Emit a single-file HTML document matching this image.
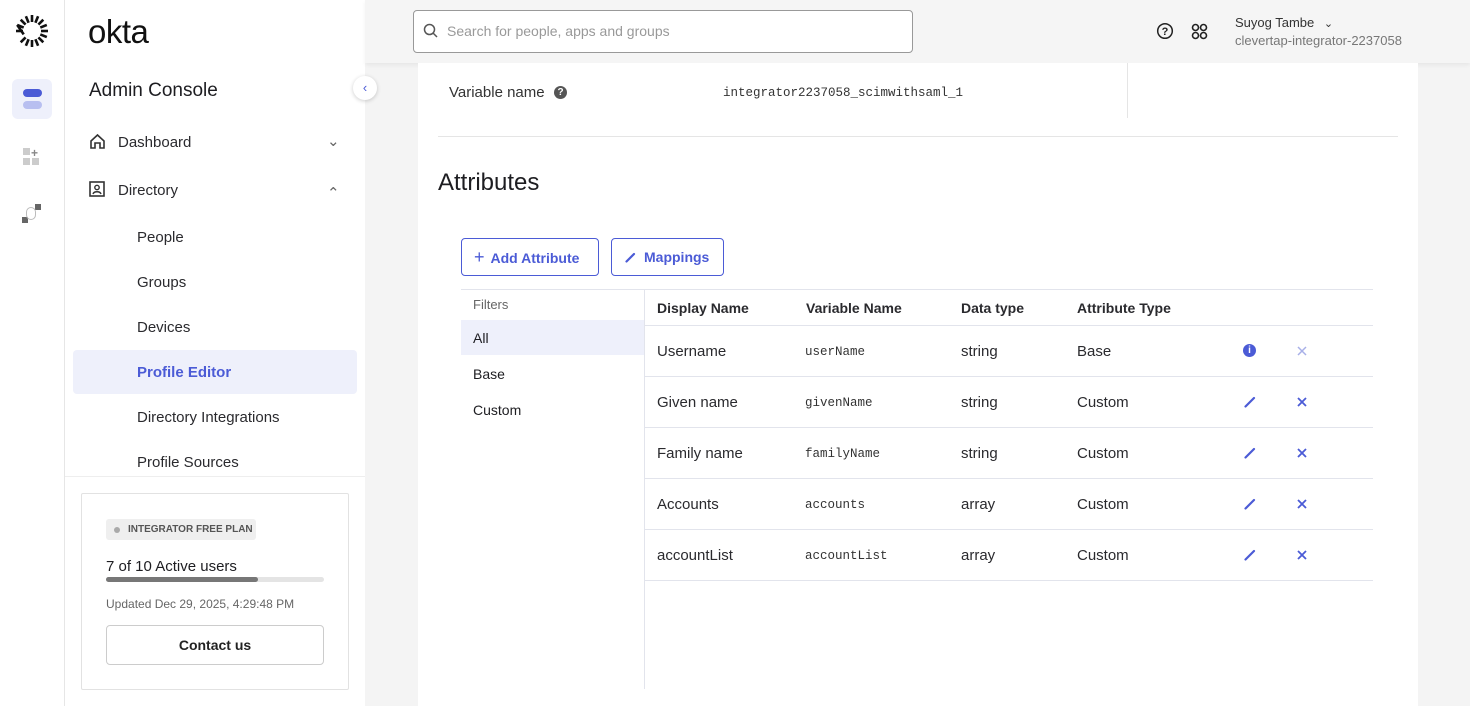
<!DOCTYPE html>
<html><head><style>
*{box-sizing:border-box;margin:0;padding:0}
body{width:1470px;height:706px;overflow:hidden;background:#f4f4f4;font-family:"Liberation Sans",sans-serif;color:#1d1d21;position:relative}
.rail{position:absolute;left:0;top:0;width:65px;height:706px;background:#fff;border-right:1px solid #e6e6e6}
.side{position:absolute;left:65px;top:0;width:300px;height:706px;background:#fff}
.hdr{position:absolute;left:365px;top:0;width:1105px;height:63px;background:#f5f5f5;box-shadow:0 2px 4px rgba(0,0,0,.06)}
.card{position:absolute;left:418px;top:63px;width:1000px;height:643px;background:#fff}
.abs{position:absolute}
.nav{position:absolute;font-size:15px;color:#2a2a2e}
.mono{font-family:"Liberation Mono",monospace;font-size:12.5px;color:#333}
.row{position:absolute;left:645px;width:728px;height:51px;border-bottom:1px solid #e2e4ec;font-size:15px;color:#2a2a2e}
.row span{position:absolute;top:17px}
.row svg{position:absolute}
</style></head><body>
<div class="rail">
<svg class="abs" style="left:15px;top:14px" width="34" height="34" viewBox="-17 -17 34 34"><g stroke="#111" stroke-width="2.6" stroke-linecap="butt">
<line x1="0" y1="-9" x2="0" y2="-16"/><line x1="0" y1="9" x2="0" y2="16"/><line x1="-9" y1="0" x2="-16" y2="0"/><line x1="9" y1="0" x2="16" y2="0"/>
<line x1="6.4" y1="-6.4" x2="11.3" y2="-11.3"/><line x1="-6.4" y1="6.4" x2="-11.3" y2="11.3"/><line x1="6.4" y1="6.4" x2="11.3" y2="11.3"/><line x1="-6.4" y1="-6.4" x2="-11.3" y2="-11.3"/>
<line x1="3.4" y1="-8.3" x2="6.1" y2="-14.8"/><line x1="-3.4" y1="8.3" x2="-6.1" y2="14.8"/><line x1="8.3" y1="3.4" x2="14.8" y2="6.1"/><line x1="-8.3" y1="-3.4" x2="-14.8" y2="-6.1"/>
<line x1="-3.4" y1="-8.3" x2="-6.1" y2="-14.8"/><line x1="3.4" y1="8.3" x2="6.1" y2="14.8"/><line x1="8.3" y1="-3.4" x2="14.8" y2="-6.1"/><line x1="-8.3" y1="3.4" x2="-14.8" y2="-6.1"/></g></svg>
<div class="abs" style="left:12px;top:79px;width:40px;height:40px;background:#eef0fb;border-radius:6px"></div>
<div class="abs" style="left:23px;top:89px;width:19px;height:8px;background:#4b5bd6;border-radius:4px"></div>
<div class="abs" style="left:23px;top:101px;width:19px;height:8px;background:#b8bff0;border-radius:4px"></div>
<div class="abs" style="left:23px;top:148px;width:7px;height:7px;background:#ccc"></div><div class="abs" style="left:23px;top:158px;width:7px;height:7px;background:#ccc"></div><div class="abs" style="left:32px;top:158px;width:7px;height:7px;background:#ccc"></div>
<div class="abs" style="left:31px;top:146px;font-size:12px;color:#888;font-weight:bold">+</div>
<div class="abs" style="left:22px;top:217px;width:6px;height:6px;background:#666"></div><div class="abs" style="left:35px;top:204px;width:6px;height:6px;background:#666"></div>
<div class="abs" style="left:26px;top:207px;width:10px;height:13px;border:1.5px solid #bbb;border-radius:5px"></div>
</div>
<div class="side">
<div class="abs" style="left:23px;top:13px;font-size:33px;letter-spacing:-0.5px;color:#111">okta</div>
<div class="abs" style="left:24px;top:80px;font-size:19px;color:#1d1d21">Admin Console</div>
<div class="abs" style="left:288px;top:76px;width:24px;height:24px;border-radius:12px;background:#fff;box-shadow:0 1px 4px rgba(0,0,0,.2);color:#4b5bd6;font-size:13px;text-align:center;line-height:24px">&#8249;</div>
<svg class="abs" style="left:24px;top:133px" width="17" height="17" viewBox="0 0 17 17"><path d="M2 8L8.5 2 15 8V15H11V10H6V15H2Z" fill="none" stroke="#333" stroke-width="1.6"/></svg>
<div class="nav" style="left:53px;top:134px">Dashboard</div>
<div class="nav" style="left:262px;top:132px;color:#666">&#8964;</div>
<svg class="abs" style="left:24px;top:181px" width="16" height="16"><rect x="1" y="1" width="14" height="14" fill="none" stroke="#333" stroke-width="1.6"/><circle cx="8" cy="6.5" r="2.2" fill="none" stroke="#333" stroke-width="1.4"/><path d="M4 13c1-3 7-3 8 0" fill="none" stroke="#333" stroke-width="1.4"/></svg>
<div class="nav" style="left:53px;top:182px">Directory</div>
<div class="nav" style="left:262px;top:184px;color:#666">&#8963;</div>
<div class="nav" style="left:72px;top:229px">People</div>
<div class="nav" style="left:72px;top:274px">Groups</div>
<div class="nav" style="left:72px;top:319px">Devices</div>
<div class="abs" style="left:8px;top:350px;width:284px;height:44px;background:#eef0fb;border-radius:4px"></div>
<div class="nav" style="left:72px;top:364px;color:#4b5bd6;font-weight:bold">Profile Editor</div>
<div class="nav" style="left:72px;top:409px">Directory Integrations</div>
<div class="nav" style="left:72px;top:454px">Profile Sources</div>
<div class="abs" style="left:0;top:476px;width:300px;height:1px;background:#eee"></div>
<div class="abs" style="left:16px;top:493px;width:268px;height:197px;border:1px solid #e2e2e2;border-radius:2px"></div>
<div class="abs" style="left:41px;top:519px;width:150px;height:21px;background:#efefef;border-radius:3px;font-size:10px;color:#555;line-height:21px;padding-left:22px;font-weight:bold">INTEGRATOR FREE PLAN</div>
<div class="abs" style="left:49px;top:527px;width:6px;height:6px;border-radius:3px;background:#aaa"></div>
<div class="abs" style="left:41px;top:558px;font-size:15px">7 of 10 Active users</div>
<div class="abs" style="left:41px;top:577px;width:218px;height:5px;background:#e4e4e4;border-radius:3px"><div style="width:152px;height:5px;background:#777;border-radius:3px"></div></div>
<div class="abs" style="left:41px;top:597px;font-size:12px;color:#666">Updated Dec 29, 2025, 4:29:48 PM</div>
<div class="abs" style="left:41px;top:625px;width:218px;height:40px;border:1px solid #ccc;border-radius:4px;text-align:center;line-height:38px;font-size:14px;font-weight:bold;color:#222">Contact us</div>
</div>
<div class="hdr">
<div class="abs" style="left:48px;top:10px;width:500px;height:43px;border:1px solid #999;border-radius:4px;background:#fff"></div>
<svg class="abs" style="left:58px;top:23px" width="16" height="16"><circle cx="6.5" cy="6.5" r="5" fill="none" stroke="#555" stroke-width="1.5"/><line x1="10" y1="10" x2="14" y2="14" stroke="#555" stroke-width="1.5"/></svg>
<div class="abs" style="left:82px;top:23px;font-size:14px;color:#999">Search for people, apps and groups</div>
<svg class="abs" style="left:791px;top:22px" width="18" height="18"><circle cx="9" cy="9" r="7.3" fill="none" stroke="#222" stroke-width="1.5"/><text x="9" y="13" font-size="11" text-anchor="middle" font-family="Liberation Sans" font-weight="bold" fill="#222">?</text></svg>
<svg class="abs" style="left:826px;top:23px" width="17" height="17" fill="none" stroke="#222" stroke-width="1.6"><circle cx="4.5" cy="4.5" r="3"/><circle cx="12.5" cy="4.5" r="3"/><circle cx="4.5" cy="12.5" r="3"/><circle cx="12.5" cy="12.5" r="3"/></svg>
<div class="abs" style="left:870px;top:15px;font-size:13px;color:#333">Suyog Tambe <span style="margin-left:6px;font-size:11px">&#8964;</span></div>
<div class="abs" style="left:870px;top:33px;font-size:13px;color:#777">clevertap-integrator-2237058</div>
</div>
<div class="card">
<div class="abs" style="left:31px;top:21px;font-size:15px;color:#333">Variable name</div>
<div class="abs" style="left:136px;top:23px;width:13px;height:13px;border-radius:7px;background:#555;color:#fff;font-size:10px;text-align:center;line-height:13px;font-weight:bold">?</div>
<div class="abs mono" style="left:305px;top:23px">integrator2237058_scimwithsaml_1</div>
<div class="abs" style="left:709px;top:0;width:1px;height:55px;background:#e5e5e5"></div>
<div class="abs" style="left:20px;top:73px;width:960px;height:1px;background:#e5e5e5"></div>
<div class="abs" style="left:20px;top:106px;font-size:24px;color:#1d1d21">Attributes</div>
<div class="abs" style="left:43px;top:175px;width:138px;height:38px;border:1px solid #4b5bd6;border-radius:4px;color:#4b5bd6;font-size:14px;font-weight:bold;line-height:36px;padding-left:12px"><span style="font-size:18px;font-weight:normal;margin-right:6px">+</span>Add Attribute</div>
<div class="abs" style="left:193px;top:175px;width:113px;height:38px;border:1px solid #4b5bd6;border-radius:4px;color:#4b5bd6;font-size:14px;font-weight:bold;line-height:36px;padding-left:32px">Mappings</div>
<svg class="abs" style="left:207px;top:188px" width="12" height="12"><path d="M1.5 10.5L9 3" stroke="#4b5bd6" stroke-width="2.2" stroke-linecap="round"/></svg>
</div>
<div class="abs" style="left:461px;top:289px;width:912px;height:1px;background:#e2e4ec"></div>
<div class="abs" style="left:644px;top:289px;width:1px;height:400px;background:#e2e4ec"></div>
<div class="abs" style="left:473px;top:297px;font-size:13px;color:#666">Filters</div>
<div class="abs" style="left:461px;top:320px;width:183px;height:35px;background:#eef0fb"></div>
<div class="abs" style="left:473px;top:330px;font-size:14px">All</div>
<div class="abs" style="left:473px;top:366px;font-size:14px">Base</div>
<div class="abs" style="left:473px;top:402px;font-size:14px">Custom</div>
<div class="row" style="top:289px;height:37px;font-weight:bold;font-size:14px"><span style="left:12px;top:11px">Display Name</span><span style="left:161px;top:11px">Variable Name</span><span style="left:316px;top:11px">Data type</span><span style="left:432px;top:11px">Attribute Type</span></div>
<div class="row" style="top:326px"><span style="left:12px">Username</span><span class="mono" style="left:160px;top:19px">userName</span><span style="left:316px">string</span><span style="left:432px">Base</span><span style="left:598px;top:18px;width:13px;height:13px;border-radius:7px;background:#4b5bd6;color:#fff;font-size:10px;text-align:center;line-height:13px;font-weight:bold">i</span><svg style="left:652px;top:20px" width="10" height="10"><path d="M1 1L9 9M9 1L1 9" stroke="#a8b0e8" stroke-width="1.5"/></svg></div>
<div class="row" style="top:377px"><span style="left:12px">Given name</span><span class="mono" style="left:160px;top:19px">givenName</span><span style="left:316px">string</span><span style="left:432px">Custom</span><svg style="left:599px;top:19px" width="12" height="12"><path d="M1.5 10.5L10 2" stroke="#4b5bd6" stroke-width="2.2" stroke-linecap="round"/></svg><svg style="left:652px;top:20px" width="10" height="10"><path d="M1 1L9 9M9 1L1 9" stroke="#4b5bd6" stroke-width="1.8"/></svg></div>
<div class="row" style="top:428px"><span style="left:12px">Family name</span><span class="mono" style="left:160px;top:19px">familyName</span><span style="left:316px">string</span><span style="left:432px">Custom</span><svg style="left:599px;top:19px" width="12" height="12"><path d="M1.5 10.5L10 2" stroke="#4b5bd6" stroke-width="2.2" stroke-linecap="round"/></svg><svg style="left:652px;top:20px" width="10" height="10"><path d="M1 1L9 9M9 1L1 9" stroke="#4b5bd6" stroke-width="1.8"/></svg></div>
<div class="row" style="top:479px"><span style="left:12px">Accounts</span><span class="mono" style="left:160px;top:19px">accounts</span><span style="left:316px">array</span><span style="left:432px">Custom</span><svg style="left:599px;top:19px" width="12" height="12"><path d="M1.5 10.5L10 2" stroke="#4b5bd6" stroke-width="2.2" stroke-linecap="round"/></svg><svg style="left:652px;top:20px" width="10" height="10"><path d="M1 1L9 9M9 1L1 9" stroke="#4b5bd6" stroke-width="1.8"/></svg></div>
<div class="row" style="top:530px"><span style="left:12px">accountList</span><span class="mono" style="left:160px;top:19px">accountList</span><span style="left:316px">array</span><span style="left:432px">Custom</span><svg style="left:599px;top:19px" width="12" height="12"><path d="M1.5 10.5L10 2" stroke="#4b5bd6" stroke-width="2.2" stroke-linecap="round"/></svg><svg style="left:652px;top:20px" width="10" height="10"><path d="M1 1L9 9M9 1L1 9" stroke="#4b5bd6" stroke-width="1.8"/></svg></div>
</body></html>
